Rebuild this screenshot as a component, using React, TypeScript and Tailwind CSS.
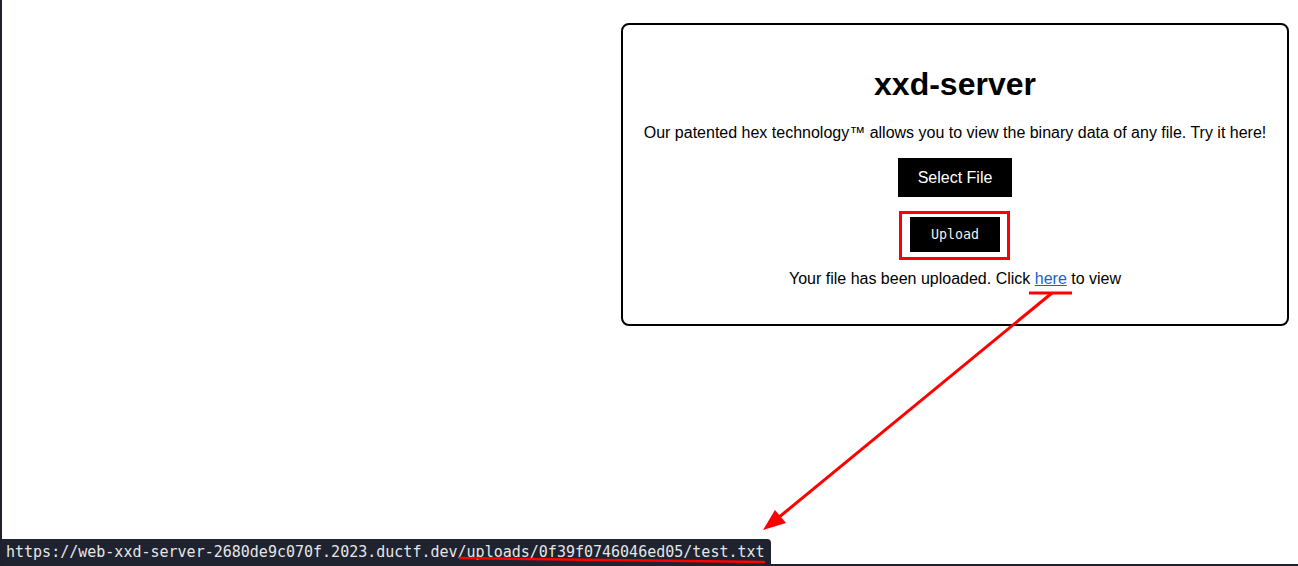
const App: React.FC = () => {
  const url =
    "https://web-xxd-server-2680de9c070f.2023.ductf.dev/uploads/0f39f0746046ed05/test.txt";

  return (
    <div className="relative h-[566px] w-[1298px] overflow-hidden bg-white border-l-2 border-[#1e2230] font-['Liberation_Sans',Arial,sans-serif] text-black">
      <div className="flex justify-end pt-[23px] pr-[9px]">
        <div className="w-[668px] h-[303px] border-2 border-black rounded-[8px] flex flex-col items-center">
          <h1 className="mt-[41px] text-[32px] leading-[37px] font-bold">xxd-server</h1>
          <p className="mt-[21px] text-[16px] leading-[18px]">
            Our patented hex technology™ allows you to view the binary data of any file. Try it here!
          </p>
          <button className="mt-[16px] w-[114px] h-[39px] bg-black text-white text-[16px]">
            Select File
          </button>
          <button className="mt-[20px] w-[90px] h-[35px] bg-black text-[#f0f0f0] text-[13.33px] font-['DejaVu_Sans_Mono',monospace]">
            Upload
          </button>
          <p className="mt-[18px] text-[16px] leading-[18px]">
            Your file has been uploaded. Click{" "}
            <a href="#" className="text-[#1a5fcf] underline">
              here
            </a>{" "}
            to view
          </p>
        </div>
      </div>

      <div className="absolute left-0 right-0 bottom-0 flex items-end">
        <div className="h-[27px] pl-[4px] pr-[6px] bg-[#1f232f] rounded-tr-[4px] flex items-center text-[15px] text-[#e6e6e6] font-['DejaVu_Sans_Mono',monospace] whitespace-nowrap">
          {url}
        </div>
        <div className="flex-1 h-[2px] bg-[#1f232f]" />
      </div>

      <svg className="absolute inset-0 pointer-events-none" width="1298" height="566">
        <rect x="898.5" y="212.5" width="108" height="46" fill="none" stroke="#ff0000" strokeWidth="3" />
        <line x1="1027" y1="293" x2="1070" y2="293" stroke="#ff0000" strokeWidth="3" />
        <line x1="1050" y1="293" x2="776" y2="518" stroke="#ff0000" strokeWidth="3" />
        <polygon points="761,530 773,510 784,523" fill="#ff0000" />
        <line x1="457" y1="558" x2="763" y2="562" stroke="#ff0000" strokeWidth="2.5" />
      </svg>
    </div>
  );
};

export default App;
